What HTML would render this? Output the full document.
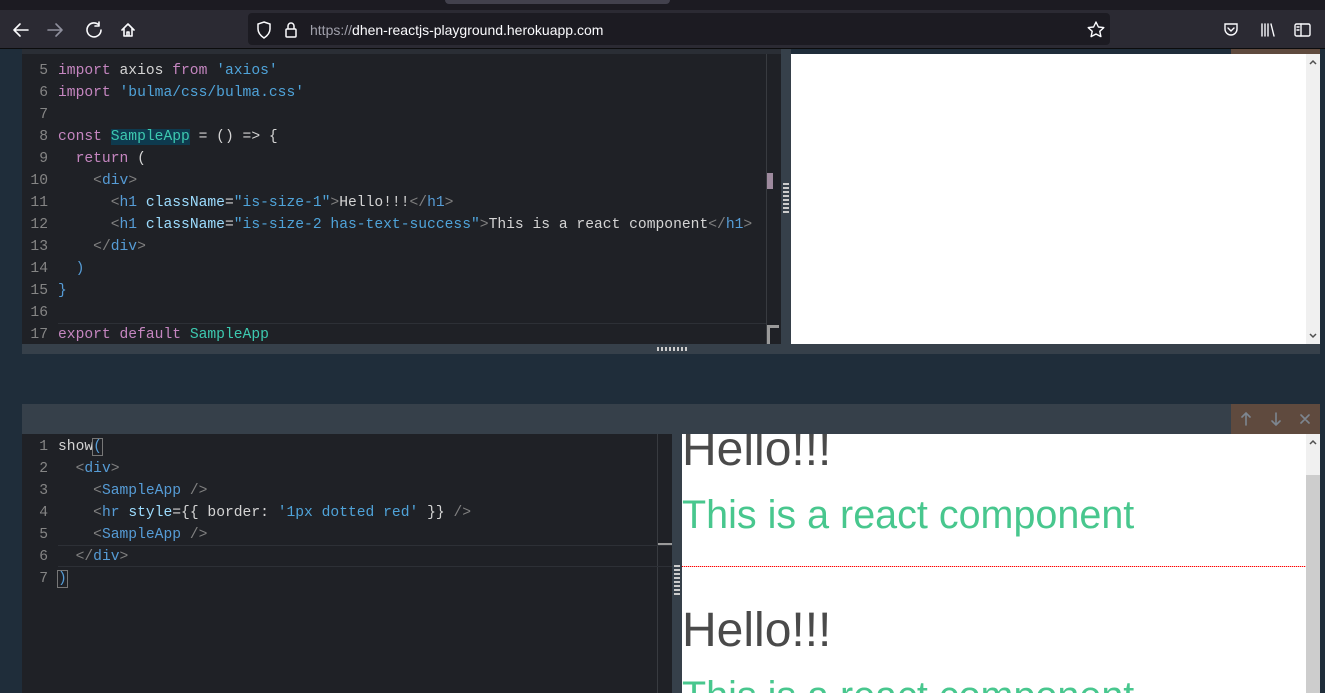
<!DOCTYPE html>
<html><head><meta charset="utf-8"><style>
*{margin:0;padding:0;box-sizing:border-box}
body{width:1325px;height:693px;overflow:hidden;background:#1f2d3a;position:relative;font-family:"Liberation Sans",sans-serif}
.a{position:absolute}
.code{font-family:"Liberation Mono",monospace;font-size:14.65px;color:#d4d4d4;white-space:pre}
.ln{position:absolute;width:28px;text-align:right;color:#858585}
.row{position:absolute;height:22px;line-height:22px}
.k{color:#c586c0}.s{color:#4fa3d9}.t{color:#3dc9b0}.g{color:#808080}.b{color:#569cd6}.p{color:#d4d4d4}
.h1{position:absolute;left:682px;font-size:48px;color:#4a4a4a;line-height:1;white-space:nowrap}
.h2{position:absolute;left:682px;font-size:39.5px;color:#48c78e;line-height:1;white-space:nowrap}
.sa{font-size:13px;color:#505050;text-align:center;width:14px;position:absolute;line-height:14px}
</style></head><body>
<div class="a" style="left:0;top:0;width:1325px;height:10px;background:#1c1b22"></div>
<div class="a" style="left:445px;top:0;width:225px;height:4px;background:#42414d;border-radius:0 0 4px 4px"></div>
<div class="a" style="left:0;top:10px;width:1325px;height:38px;background:#2b2a33"></div>
<div class="a" style="left:0;top:48px;width:1325px;height:1px;background:#0c0c0d"></div>
<svg class="a" style="left:8px;top:18px" width="140" height="24" viewBox="0 0 140 24" fill="none" stroke-width="1.6" stroke-linecap="round" stroke-linejoin="round">
<path d="M6 12h14M6 12l6-6M6 12l6 6" stroke="#fbfbfe"/>
<path d="M40 12h14M54 12l-6-6M54 12l-6 6" stroke="#8f8f9d"/>
<path d="M91 7a7 7 0 1 0 2 5M91 4v4h-4" stroke="#fbfbfe"/>
<path d="M114 12l6-6 6 6M116 10v8h8v-8M119 18v-4h2v4" stroke="#fbfbfe"/>
</svg>
<div class="a" style="left:248px;top:13px;width:862px;height:32px;background:#1c1b22;border-radius:4px"></div>
<svg class="a" style="left:255px;top:20px" width="50" height="20" viewBox="0 0 50 20" fill="none" stroke="#fbfbfe" stroke-width="1.5">
<path d="M9 2l6 2v5c0 4-3 7-6 9-3-2-6-5-6-9V4z"/>
<rect x="31" y="9" width="10" height="8" rx="1"/><path d="M33 9V6a3 3 0 0 1 6 0v3"/>
</svg>
<div class="a" style="left:310px;top:22px;font-size:14px;color:#fbfbfe;white-space:nowrap"><span style="color:#a0a0ab">https://</span>dhen-reactjs-playground.herokuapp.com</div>
<svg class="a" style="left:1085px;top:19px" width="22" height="22" viewBox="0 0 22 22" fill="none" stroke="#fbfbfe" stroke-width="1.4" stroke-linejoin="round"><path d="M11 3l2.4 5 5.4.6-4 3.7 1.1 5.3L11 15l-4.9 2.6 1.1-5.3-4-3.7 5.4-.6z"/></svg>
<svg class="a" style="left:1220px;top:19px" width="100" height="22" viewBox="0 0 100 22" fill="none" stroke="#fbfbfe" stroke-width="1.4" stroke-linecap="round">
<path d="M5 5h12v5a6 6 0 0 1-12 0z"/><path d="M8 9l3 3 3-3"/>
<path d="M42 5v12M45 5v12M48 5v12M51 5l3 12"/>
<rect x="75" y="5" width="15" height="12" rx="1.5"/><path d="M81 5v12M77 8h2M77 11h2"/>
</svg>

<div class="a" style="left:22px;top:49px;width:759px;height:295px;background:#1f2126"></div>
<div class="a" style="left:22px;top:49px;width:759px;height:5px;background:#2a2e35"></div>
<div class="a" style="left:766px;top:54px;width:1px;height:290px;background:#383b40"></div>
<div class="a" style="left:767px;top:173px;width:6px;height:16px;background:#9e8a9e"></div>
<div class="a" style="left:767px;top:325px;width:12px;height:19px;border-left:3px solid #9a9a9a;border-top:3px solid #9a9a9a"></div>
<div class="a" style="left:781px;top:49px;width:10px;height:295px;background:#36404a"></div>
<div class="a" style="left:783px;top:183px;width:6px;height:30px;background:repeating-linear-gradient(#ccc 0 2px,transparent 2px 4px)"></div>
<div class="a" style="left:58px;top:323px;width:708px;height:1px;background:#2d3036"></div>
<div class="code a" style="left:20px;top:60px">
<div class="row" style="top:0"><span class="ln">5</span><span style="position:absolute;left:38px"><span class="k">import</span> axios <span class="k">from</span> <span class="s">'axios'</span></span></div>
<div class="row" style="top:22px"><span class="ln">6</span><span style="position:absolute;left:38px"><span class="k">import</span> <span class="s">'bulma/css/bulma.css'</span></span></div>
<div class="row" style="top:44px"><span class="ln">7</span></div>
<div class="row" style="top:66px"><span class="ln">8</span><span style="position:absolute;left:38px"><span class="k">const</span> <span class="t" style="background:#0e3a4e">SampleApp</span> = () =&gt; {</span></div>
<div class="row" style="top:88px"><span class="ln">9</span><span style="position:absolute;left:38px">  <span class="k">return</span> (</span></div>
<div class="row" style="top:110px"><span class="ln">10</span><span style="position:absolute;left:38px">    <span class="g">&lt;</span><span class="b">div</span><span class="g">&gt;</span></span></div>
<div class="row" style="top:132px"><span class="ln">11</span><span style="position:absolute;left:38px">      <span class="g">&lt;</span><span class="b">h1</span> <span style="color:#9cdcfe">className</span>=<span class="s">"is-size-1"</span><span class="g">&gt;</span>Hello!!!<span class="g">&lt;/</span><span class="b">h1</span><span class="g">&gt;</span></span></div>
<div class="row" style="top:154px"><span class="ln">12</span><span style="position:absolute;left:38px">      <span class="g">&lt;</span><span class="b">h1</span> <span style="color:#9cdcfe">className</span>=<span class="s">"is-size-2 has-text-success"</span><span class="g">&gt;</span>This is a react component<span class="g">&lt;/</span><span class="b">h1</span><span class="g">&gt;</span></span></div>
<div class="row" style="top:176px"><span class="ln">13</span><span style="position:absolute;left:38px">    <span class="g">&lt;/</span><span class="b">div</span><span class="g">&gt;</span></span></div>
<div class="row" style="top:198px"><span class="ln">14</span><span style="position:absolute;left:38px">  <span class="b">)</span></span></div>
<div class="row" style="top:220px"><span class="ln">15</span><span style="position:absolute;left:38px"><span class="b">}</span></span></div>
<div class="row" style="top:242px"><span class="ln">16</span></div>
<div class="row" style="top:264px"><span class="ln">17</span><span style="position:absolute;left:38px"><span class="k">export</span> <span class="k">default</span> <span class="t">SampleApp</span></span></div>
</div>

<div class="a" style="left:791px;top:54px;width:515px;height:290px;background:#fff"></div>
<div class="a" style="left:1231px;top:49px;width:89px;height:5px;background:#5f4a3e"></div>
<div class="a" style="left:1306px;top:54px;width:14px;height:290px;background:#f0f0f0"><svg class="a" style="left:3px;top:5px" width="8" height="6"><path d="M1 5l3-3 3 3" stroke="#505050" stroke-width="1.5" fill="none"/></svg><svg class="a" style="left:3px;top:279px" width="8" height="6"><path d="M1 1l3 3 3-3" stroke="#505050" stroke-width="1.5" fill="none"/></svg></div>
<div class="a" style="left:22px;top:344px;width:1298px;height:10px;background:#36404a"></div>
<div class="a" style="left:657px;top:347px;width:30px;height:4px;background:repeating-linear-gradient(90deg,#ccc 0 2px,transparent 2px 4px)"></div>

<div class="a" style="left:22px;top:404px;width:1298px;height:30px;background:#36404a"></div>
<div class="a" style="left:1231px;top:404px;width:89px;height:30px;background:#5f4a3e"></div>
<svg class="a" style="left:1231px;top:404px" width="89" height="30" fill="none" stroke="#7d8690" stroke-width="1.6" stroke-linecap="round"><path d="M15 9v12M11 13l4-4 4 4M45 9v12M41 17l4 4 4-4M70 11l8 8M78 11l-8 8"/></svg>

<div class="a" style="left:22px;top:434px;width:650px;height:259px;background:#1f2126"></div>
<div class="a" style="left:657px;top:434px;width:1px;height:259px;background:#383b40"></div>
<div class="a" style="left:658px;top:543px;width:14px;height:2px;background:#9a9a9a"></div>
<div class="a" style="left:58px;top:545px;width:614px;height:1px;background:#2d3036"></div>
<div class="a" style="left:58px;top:566px;width:614px;height:1px;background:#2d3036"></div>
<div class="a" style="left:672px;top:434px;width:10px;height:259px;background:#36404a"></div>
<div class="a" style="left:674px;top:565px;width:6px;height:30px;background:repeating-linear-gradient(#ccc 0 2px,transparent 2px 4px)"></div>
<div class="code a" style="left:20px;top:436px">
<div class="row" style="top:0"><span class="ln">1</span><span style="position:absolute;left:38px">show<span class="b" style="outline:1px solid #777">(</span></span></div>
<div class="row" style="top:22px"><span class="ln">2</span><span style="position:absolute;left:38px">  <span class="g">&lt;</span><span class="b">div</span><span class="g">&gt;</span></span></div>
<div class="row" style="top:44px"><span class="ln">3</span><span style="position:absolute;left:38px">    <span class="g">&lt;</span><span class="b">SampleApp</span> <span class="g">/&gt;</span></span></div>
<div class="row" style="top:66px"><span class="ln">4</span><span style="position:absolute;left:38px">    <span class="g">&lt;</span><span class="b">hr</span> <span style="color:#9cdcfe">style</span>={{ border: <span class="s">'1px dotted red'</span> }} <span class="g">/&gt;</span></span></div>
<div class="row" style="top:88px"><span class="ln">5</span><span style="position:absolute;left:38px">    <span class="g">&lt;</span><span class="b">SampleApp</span> <span class="g">/&gt;</span></span></div>
<div class="row" style="top:110px"><span class="ln">6</span><span style="position:absolute;left:38px">  <span class="g">&lt;/</span><span class="b">div</span><span class="g">&gt;</span></span></div>
<div class="row" style="top:132px"><span class="ln">7</span><span style="position:absolute;left:38px"><span class="b" style="outline:1px solid #777">)</span></span></div>
</div>

<div class="a" style="left:682px;top:434px;width:624px;height:259px;background:#fff;overflow:hidden">
<div class="h1" style="left:0;top:-8px">Hello!!!</div>
<div class="h2" style="left:0;top:62px">This is a react component</div>
<div class="a" style="left:0;top:132px;width:624px;height:1px;background:repeating-linear-gradient(90deg,#f00 0 1px,#fbb 1px 2px)"></div>
<div class="h1" style="left:0;top:173px">Hello!!!</div>
<div class="h2" style="left:0;top:243px">This is a react component</div>
</div>
<div class="a" style="left:1306px;top:434px;width:14px;height:259px;background:#f0f0f0"><svg class="a" style="left:3px;top:5px" width="8" height="6"><path d="M1 5l3-3 3 3" stroke="#505050" stroke-width="1.5" fill="none"/></svg><div class="a" style="top:41px;width:14px;height:218px;background:#cdcdcd"></div></div>
</body></html>
